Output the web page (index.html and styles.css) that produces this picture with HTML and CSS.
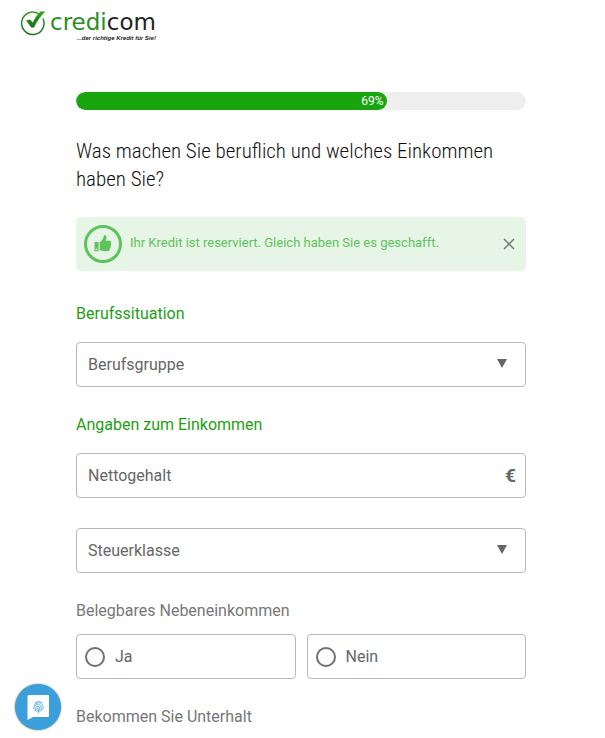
FILE: index.html
```html
<!DOCTYPE html>
<html lang="de">
<head>
    <meta charset="UTF-8">
    <meta name="viewport" content="width=device-width, initial-scale=1.0">
    <title>Credicom - Kreditanfrage</title>
    <link rel="stylesheet" href="styles.css">
</head>
<body>

<header class="header">
    <a class="logo" href="#">
        <svg class="logo-mark" viewBox="0 0 26 26" aria-hidden="true">
            <defs>
                <linearGradient id="logo-green" x1="0" y1="0" x2="0" y2="1">
                    <stop offset="0" stop-color="#2fa31c"/>
                    <stop offset="1" stop-color="#1d6f22"/>
                </linearGradient>
            </defs>
            <path d="M18.500 3.600A11.200 11.200 0 1 0 23 8.600" fill="none" stroke="url(#logo-green)" stroke-width="1.500"/>
            <path d="M6 10.500L10 9.500L12.800 12.500C14.500 8.500 17.500 4 20.500 1.500L25.400 1.500C20.500 6 17 11.500 14 17.500L11.500 17.700Z" fill="url(#logo-green)"/>
        </svg>
        <span class="logo-text">
            <span class="logo-name"><span class="logo-credi">credi</span>com</span>
            <span class="logo-claim">...der richtige Kredit für Sie!</span>
        </span>
    </a>
</header>

<main class="container">
    <div class="progress">
        <div class="progress-bar" style="width: 69%">69%</div>
    </div>

    <h1>Was machen Sie beruflich und welches Einkommen haben Sie?</h1>

    <div class="alert">
        <svg class="alert-icon" viewBox="0 0 38 38" aria-hidden="true">
            <circle cx="19" cy="19" r="17.500" fill="none" stroke="#5fc35b" stroke-width="3"/>
            <path fill="#5fc35b" fill-rule="evenodd" d="M10.500 17H14.600V26.300H10.500ZM12.500 23.400A.9.900 0 1 0 12.500 25.200A.9.900 0 1 0 12.500 23.400Z"/>
            <path fill="#5fc35b" d="M15.600 17.500L18.700 14.200C19.700 13 19.200 10.300 20.600 10.300C22.800 10.300 22.900 12.800 22.200 14.500L21.600 15.800H25.500C27.400 15.800 27.700 17.700 26.700 18.500C27.500 19.200 27.300 20.600 26.400 21.100C27 22 26.600 23.200 25.700 23.600C26.100 25.200 25.200 26.300 23.600 26.300H20.500C18.500 26.300 17 25.400 15.600 25.300Z"/>
        </svg>
        <p>Ihr Kredit ist reserviert. Gleich haben Sie es geschafft.</p>
        <button class="alert-close" type="button" aria-label="Schließen">
            <svg viewBox="0 0 12 12" aria-hidden="true"><path d="M1 1L11 11M11 1L1 11" fill="none" stroke="#6f7b6f" stroke-width="1.500"/></svg>
        </button>
    </div>

    <form>
        <h2>Berufssituation</h2>
        <div class="field select">
            <select aria-label="Berufsgruppe">
                <option>Berufsgruppe</option>
            </select>
        </div>

        <h2>Angaben zum Einkommen</h2>
        <div class="field">
            <input type="text" placeholder="Nettogehalt" aria-label="Nettogehalt">
            <span class="unit">€</span>
        </div>
        <div class="field select">
            <select aria-label="Steuerklasse">
                <option>Steuerklasse</option>
            </select>
        </div>

        <fieldset>
            <legend>Belegbares Nebeneinkommen</legend>
            <div class="radios">
                <label class="radio"><input type="radio" name="nebeneinkommen" value="ja">Ja</label>
                <label class="radio"><input type="radio" name="nebeneinkommen" value="nein">Nein</label>
            </div>
        </fieldset>

        <fieldset>
            <legend>Bekommen Sie Unterhalt</legend>
        </fieldset>
    </form>
</main>

<button class="consent-btn" type="button" aria-label="Datenschutz">
    <svg viewBox="0 0 46 46" aria-hidden="true">
        <path d="M14 11H33Q34 11 34 12V32Q34 33 33 33H18L12.500 36V12.500Q12.500 11 14 11Z" fill="#fff"/>
        <g fill="none" stroke="#5fb0e0" stroke-width="0.900" stroke-linecap="round">
            <path d="M20 18.500Q23.500 16 27 18.500"/>
            <path d="M19 22Q19.500 18.800 23.500 18.800Q27.600 18.800 28 23V25"/>
            <path d="M19 25V24Q19 20.600 23.500 20.600Q26.400 20.600 26.400 24V26.500"/>
            <path d="M20.500 27V24.500Q20.500 22.300 23 22.300Q24.900 22.300 24.900 25V27.500"/>
            <path d="M22 28V25Q22 24 22.800 24Q23.500 24 23.500 25V28.500"/>
        </g>
    </svg>
</button>

</body>
</html>
```
FILE: styles.css
```css
* { margin: 0; padding: 0; box-sizing: border-box; }
body { background: #fff; color: #666; font-family: Roboto, "Liberation Sans", sans-serif; font-size: 16px; line-height: 20px; }

.header { display: flex; padding: 10px 20px 0; }
.logo { display: flex; gap: 4px; color: #222; text-decoration: none; }
.logo-mark { width: 26px; height: 26px; }
.logo-text { display: flex; flex-direction: column; align-items: flex-end; }
.logo-name { font-family: "DejaVu Sans", sans-serif; font-size: 23px; line-height: 24px; }
.logo-credi { color: #2a8f22; }
.logo-claim { font-family: "Liberation Sans", sans-serif; font-size: 6px; font-style: italic; font-weight: 700; line-height: 8px; }

.container { padding: 50px 79px 0 76px; }

.progress { height: 18px; background: #eee; border-radius: 9px; overflow: hidden; }
.progress-bar { height: 18px; padding-right: 3px; background: #18a50e; border-radius: 9px; color: #fff; font-size: 12px; line-height: 18px; text-align: right; }

h1 { margin-top: 27px; color: #111; font-family: "Roboto Condensed", Roboto, sans-serif; font-size: 21px; font-weight: 300; line-height: 28px; }

.alert { display: flex; gap: 8px; margin: 24px 0 33px; padding: 8px; background: #e7f5e7; border-radius: 5px; color: #5fc35b; font-size: 13px; }
.alert-icon { flex: none; width: 38px; height: 38px; }
.alert p { flex: 1; padding: 8px 0; }
.alert-close { align-self: center; width: 18px; height: 18px; padding: 3px; background: none; border: none; cursor: pointer; }
.alert-close svg { display: block; width: 12px; height: 12px; }

h2 { margin-bottom: 18px; color: #1d9f14; font-size: 16px; font-weight: 400; line-height: 20px; }

.field { position: relative; margin-bottom: 30px; }
.field:has(+ h2), .field:has(+ fieldset) { margin-bottom: 28px; }
.field input, .field select { display: block; width: 100%; height: 45px; padding: 0 11px; background: #fff; border: 1px solid #b8b8b8; border-radius: 4px; color: #666; font: inherit; appearance: none; }
.field input::placeholder { color: #666; opacity: 1; }
.select::after { content: ""; position: absolute; top: 17px; right: 19px; border: 5px solid transparent; border-top: 9px solid #666; border-bottom: none; pointer-events: none; }
.unit { position: absolute; top: 13px; right: 10px; font-size: 19px; font-weight: 700; }

fieldset { border: none; }
fieldset + fieldset { margin-top: 28px; }
legend { color: #777; }
.radios { display: grid; grid-template-columns: 1fr 1fr; gap: 11px; margin-top: 13px; }
.radio { display: flex; align-items: center; gap: 10px; height: 45px; padding: 0 8px; border: 1px solid #b8b8b8; border-radius: 4px; cursor: pointer; }
.radio input { width: 20px; height: 20px; border: 2px solid #707070; border-radius: 50%; appearance: none; }
.radio input:checked { border-width: 6px; border-color: #18a50e; }

.consent-btn { position: fixed; left: 15px; bottom: 8px; width: 46px; height: 46px; background: #3b9fdb; border: none; border-radius: 50%; box-shadow: 0 0 2px rgba(0, 0, 0, 0.5); cursor: pointer; }
.consent-btn svg { display: block; width: 46px; height: 46px; }
```
